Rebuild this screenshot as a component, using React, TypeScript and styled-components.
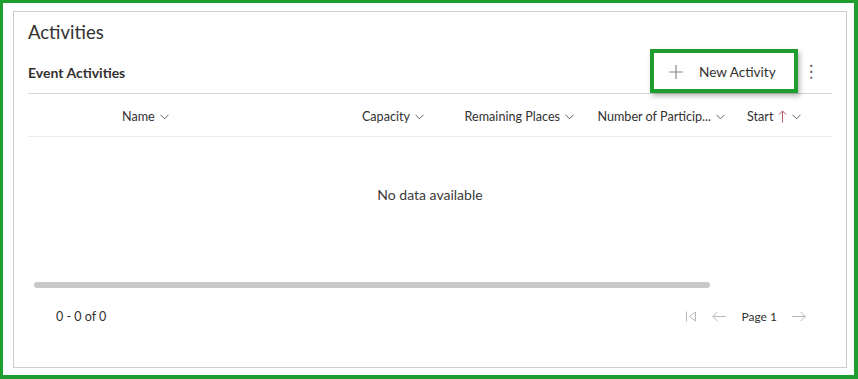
import React from 'react';
import styled, { createGlobalStyle } from 'styled-components';

const GlobalStyle = createGlobalStyle`
  html, body {
    margin: 0;
    padding: 0;
    background: #ffffff;
  }
  body {
    font-family: Lato, "Open Sans", "Liberation Sans", sans-serif;
    color: #323130;
  }
`;

interface Column {
  key: string;
  label: string;
  width: number;
  align: 'start' | 'end';
  sorted?: boolean;
}

const columns: Column[] = [
  { key: 'name', label: 'Name', width: 236, align: 'start' },
  { key: 'capacity', label: 'Capacity', width: 82, align: 'end' },
  { key: 'remaining', label: 'Remaining Places', width: 150, align: 'end' },
  { key: 'participants', label: 'Number of Particip...', width: 151, align: 'end' },
  { key: 'start', label: 'Start', width: 75, align: 'start', sorted: true },
];

const Chevron = () => (
  <svg width="9" height="6" viewBox="0 0 9 6" fill="none">
    <path d="M0.5 0.8 L4.5 4.8 L8.5 0.8" stroke="#605e5c" strokeWidth="1" />
  </svg>
);

const SortUp = () => (
  <svg width="9" height="13" viewBox="0 0 9 13" fill="none">
    <path d="M4.5 12.5 V1 M1 4.5 L4.5 1 L8 4.5" stroke="#b4545c" strokeWidth="1" />
  </svg>
);

const PlusIcon = () => (
  <svg width="14" height="14" viewBox="0 0 14 14" fill="none">
    <path d="M7 0 V14 M0 7 H14" stroke="#8a8886" strokeWidth="1.2" />
  </svg>
);

const FirstPageIcon = () => (
  <svg width="11" height="11" viewBox="0 0 11 11" fill="none">
    <path d="M0.5 0.5 V10.5 M9.5 1 L3.5 5.5 L9.5 10 Z" stroke="#b8b8b8" strokeWidth="1" />
  </svg>
);

const ArrowIcon: React.FC<{ dir: 'left' | 'right' }> = ({ dir }) => (
  <svg width="14" height="11" viewBox="0 0 14 11" fill="none">
    {dir === 'left' ? (
      <path d="M13.8 5.5 H0.8 M5.5 0.8 L0.8 5.5 L5.5 10.2" stroke="#b8b8b8" strokeWidth="1" />
    ) : (
      <path d="M0.2 5.5 H13.2 M8.5 0.8 L13.2 5.5 L8.5 10.2" stroke="#b8b8b8" strokeWidth="1" />
    )}
  </svg>
);

const App: React.FC = () => {
  return (
    <>
      <GlobalStyle />
      <Frame>
        <Card>
          <Title>Activities</Title>
          <HeaderRow>
            <SubTitle>Event Activities</SubTitle>
            <Actions>
              <NewButton>
                <PlusIcon />
                <span>New Activity</span>
              </NewButton>
              <MoreButton>⋮</MoreButton>
            </Actions>
          </HeaderRow>
          <GridHeader>
            <SelectCell />
            {columns.map((col) => (
              <HeaderCell key={col.key} $width={col.width} $align={col.align}>
                <span>{col.label}</span>
                {col.sorted && <SortUp />}
                <Chevron />
              </HeaderCell>
            ))}
          </GridHeader>
          <EmptyBody>No data available</EmptyBody>
          <ScrollTrack />
          <Footer>
            <RecordCount>0 - 0 of 0</RecordCount>
            <Pager>
              <FirstPageIcon />
              <PagerGap $w={15} />
              <ArrowIcon dir="left" />
              <PageLabel>Page 1</PageLabel>
              <ArrowIcon dir="right" />
            </Pager>
          </Footer>
        </Card>
      </Frame>
    </>
  );
};

export default App;

// Styled Components
const Frame = styled.div`
  box-sizing: border-box;
  width: 858px;
  height: 379px;
  border-style: solid;
  border-color: #1f9e2f;
  border-width: 3px 4px 4px 3px;
  padding: 8px 7px 7px 10px;
  background: #ffffff;
`;

const Card = styled.section`
  box-sizing: border-box;
  height: 100%;
  border: 1px solid #cdcdcd;
  padding: 8px 14px 0 14px;
  display: flex;
  flex-direction: column;
`;

const Title = styled.h2`
  margin: 0;
  font-size: 18.5px;
  font-weight: 400;
  line-height: 24px;
  color: #323130;
`;

const HeaderRow = styled.div`
  box-sizing: border-box;
  margin-top: 5px;
  height: 45px;
  display: flex;
  align-items: center;
  justify-content: space-between;
  border-bottom: 1px solid #d6d6d6;
`;

const SubTitle = styled.h3`
  margin: 3px 0 0 0;
  font-size: 14px;
  font-weight: 700;
  color: #323130;
`;

const Actions = styled.div`
  display: flex;
  align-items: center;
  align-self: stretch;
`;

const NewButton = styled.button`
  box-sizing: border-box;
  height: 44px;
  width: 148px;
  display: flex;
  align-items: center;
  gap: 16px;
  padding: 2px 0 0 15px;
  border: 4px solid #1f9e2f;
  background: #ffffff;
  box-shadow: 2px 3px 5px rgba(0, 0, 0, 0.28);
  font-family: inherit;
  font-size: 13.6px;
  color: #323130;
  cursor: pointer;
`;

const MoreButton = styled.button`
  width: 26px;
  margin: 0 8px 0 0;
  border: none;
  background: transparent;
  font-family: "DejaVu Sans", sans-serif;
  font-size: 17px;
  color: #605e5c;
  padding: 0;
  text-align: center;
`;

const GridHeader = styled.div`
  display: flex;
  height: 39px;
  padding-top: 3px;
  align-items: center;
  border-bottom: 1px solid #edebe9;
`;

const SelectCell = styled.div`
  width: 86px;
  flex: none;
`;

const HeaderCell = styled.div<{ $width: number; $align: 'start' | 'end' }>`
  box-sizing: border-box;
  width: ${(p) => p.$width}px;
  flex: none;
  display: flex;
  align-items: center;
  justify-content: ${(p) => (p.$align === 'end' ? 'flex-end' : 'flex-start')};
  gap: 5px;
  padding: 0 8px;
  padding-left: ${(p) => (p.$align === 'start' ? (p.$width < 100 ? 14 : 8) : 8)}px;
  font-size: 12.6px;
  color: #323130;
  white-space: nowrap;

  svg {
    flex: none;
  }
`;

const EmptyBody = styled.div`
  box-sizing: border-box;
  height: 145px;
  padding-top: 48px;
  text-align: center;
  font-size: 14px;
  line-height: 20px;
  color: #3b3a39;
`;

const ScrollTrack = styled.div`
  margin-left: 6px;
  width: 676px;
  height: 6px;
  border-radius: 3px;
  background: #c8c8c8;
`;

const Footer = styled.div`
  height: 54px;
  display: flex;
  align-items: center;
  justify-content: space-between;
  padding: 1px 26px 0 28px;
`;

const RecordCount = styled.span`
  font-size: 12.5px;
  color: #323130;
`;

const Pager = styled.div`
  display: flex;
  align-items: center;
`;

const PagerGap = styled.span<{ $w: number }>`
  width: ${(p) => p.$w}px;
`;

const PageLabel = styled.span`
  margin: 0 15px 0 16px;
  font-size: 12px;
  color: #323130;
`;
